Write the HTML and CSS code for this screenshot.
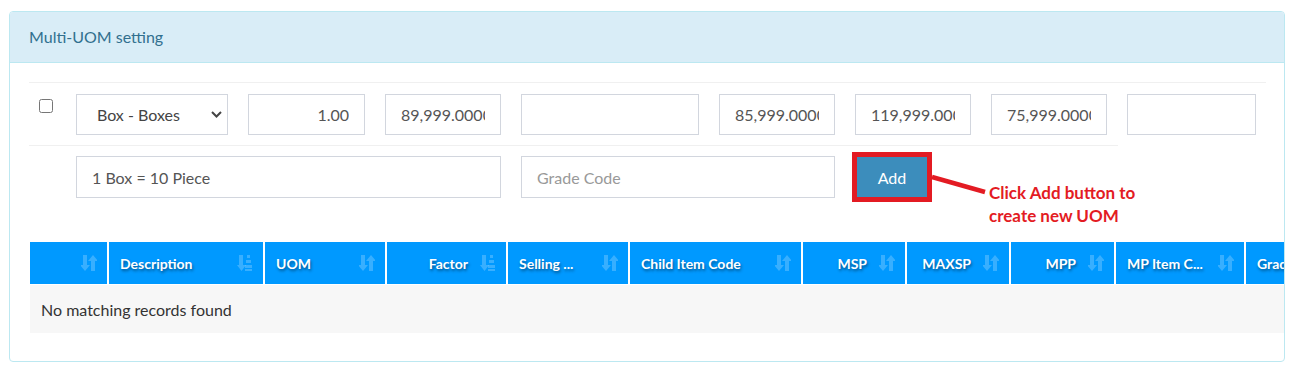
FILE: index.html
```html
<!DOCTYPE html>
<html lang="en">
<head>
  <meta charset="UTF-8">
  <title>Multi-UOM setting</title>
  <link rel="stylesheet" href="styles.css">
</head>
<body>
  <div class="panel">
    <div class="panel-heading">Multi-UOM setting</div>
    <div class="panel-body">

      <!-- main uom line -->
      <div class="form-row row-main">
        <div class="chk-cell"><input type="checkbox" class="chk"></div>
        <div class="select-wrap w-uom">
          <select class="field select">
            <option>Box - Boxes</option>
          </select>
          <svg class="chevron" width="11" height="7" viewBox="0 0 11 7"><path d="M1 1l4.5 4.5L10 1" fill="none" stroke="#444" stroke-width="2"/></svg>
        </div>
        <input class="field num w-factor" value="1.00">
        <input class="field w-price" value="89,999.00000">
        <input class="field w-wide" value="">
        <input class="field w-price" value="85,999.00000">
        <input class="field w-price" value="119,999.00000">
        <input class="field w-price" value="75,999.00000">
        <input class="field w-last" value="">
      </div>

      <!-- description / grade line -->
      <div class="form-row row-extra">
        <input class="field w-desc" value="1 Box = 10 Piece">
        <input class="field w-grade" placeholder="Grade Code">
        <div class="add-wrap">
          <button class="btn-add">Add</button>
          <svg class="callout-line" width="64" height="30" viewBox="0 0 64 30"><line x1="5" y1="8" x2="58" y2="23" stroke="#e31b23" stroke-width="4.5"/></svg>
          <div class="callout-text">Click Add button to<br>create new UOM</div>
        </div>
      </div>

      <div class="table-wrap">
        <table class="uom-table">
          <thead>
            <tr>
              <th class="c-chk"><svg class="sort" width="16" height="18" viewBox="0 0 16 18"><path d="M2 1h4v10h3l-5 6-5-6h3z M10 17h4V7h3l-5-6-5 6h3z" /></svg></th>
              <th class="c-desc">Description<svg class="sort" width="16" height="18" viewBox="0 0 16 18"><path d="M1 1h4v10h3l-4.5 6L-1 11h2z" transform="translate(1 0)"/><rect x="10" y="1" width="3" height="3"/><rect x="9" y="6" width="5" height="3"/><rect x="8" y="11" width="7" height="3"/><rect x="8" y="15" width="7" height="2"/></svg></th>
              <th class="c-uom">UOM<svg class="sort" width="16" height="18" viewBox="0 0 16 18"><path d="M2 1h4v10h3l-5 6-5-6h3z M10 17h4V7h3l-5-6-5 6h3z" /></svg></th>
              <th class="c-factor right">Factor<svg class="sort" width="16" height="18" viewBox="0 0 16 18"><path d="M1 1h4v10h3l-4.5 6L-1 11h2z" transform="translate(1 0)"/><rect x="10" y="1" width="3" height="3"/><rect x="9" y="6" width="5" height="3"/><rect x="8" y="11" width="7" height="3"/><rect x="8" y="15" width="7" height="2"/></svg></th>
              <th class="c-sell">Selling ...<svg class="sort" width="16" height="18" viewBox="0 0 16 18"><path d="M2 1h4v10h3l-5 6-5-6h3z M10 17h4V7h3l-5-6-5 6h3z" /></svg></th>
              <th class="c-child">Child Item Code<svg class="sort" width="16" height="18" viewBox="0 0 16 18"><path d="M2 1h4v10h3l-5 6-5-6h3z M10 17h4V7h3l-5-6-5 6h3z" /></svg></th>
              <th class="c-msp right">MSP<svg class="sort" width="16" height="18" viewBox="0 0 16 18"><path d="M2 1h4v10h3l-5 6-5-6h3z M10 17h4V7h3l-5-6-5 6h3z" /></svg></th>
              <th class="c-maxsp right">MAXSP<svg class="sort" width="16" height="18" viewBox="0 0 16 18"><path d="M2 1h4v10h3l-5 6-5-6h3z M10 17h4V7h3l-5-6-5 6h3z" /></svg></th>
              <th class="c-mpp right">MPP<svg class="sort" width="16" height="18" viewBox="0 0 16 18"><path d="M2 1h4v10h3l-5 6-5-6h3z M10 17h4V7h3l-5-6-5 6h3z" /></svg></th>
              <th class="c-mpitem">MP Item C...<svg class="sort" width="16" height="18" viewBox="0 0 16 18"><path d="M2 1h4v10h3l-5 6-5-6h3z M10 17h4V7h3l-5-6-5 6h3z" /></svg></th>
              <th class="c-grade">Grade Code<svg class="sort" width="16" height="18" viewBox="0 0 16 18"><path d="M2 1h4v10h3l-5 6-5-6h3z M10 17h4V7h3l-5-6-5 6h3z" /></svg></th>
            </tr>
          </thead>
          <tbody>
            <tr>
              <td colspan="11" class="empty">No matching records found</td>
            </tr>
          </tbody>
        </table>
      </div>

    </div>
  </div>
</body>
</html>
```

FILE: styles.css
```css
* {
  box-sizing: border-box;
}
body {
  margin: 0;
  padding: 11px 8px 0 9px;
  font-family: 'Lato', 'Liberation Sans', sans-serif;
  font-size: 16px;
  color: #333;
  background: #fff;
}
.panel {
  border: 1px solid #bce8f1;
  border-radius: 4px;
  overflow: hidden;
}
.panel-heading {
  height: 51px;
  line-height: 50px;
  padding: 0 19px;
  background: #d9edf7;
  color: #31708f;
  border-bottom: 1px solid #bce8f1;
}
.panel-body {
  padding: 19px 18px 28px 19px;
}
.form-row {
  display: flex;
  align-items: flex-start;
  gap: 20px;
}
.row-main {
  border-top: 1px solid #f0f0f0;
  padding: 11px 10px 10px;
}
.row-extra {
  width: 1089px;
  border-top: 1px solid #f0f0f0;
  padding: 10px 0 0 47px;
  align-items: center;
}
.chk-cell {
  width: 17px;
  padding-top: 3px;
}
.chk {
  margin: 0;
  width: 14px;
  height: 14px;
}
.field {
  height: 41px;
  border: 1px solid #d2d6de;
  border-radius: 0;
  padding: 0 15px;
  font-family: inherit;
  font-size: 16px;
  color: #555;
  background: #fff;
  outline: none;
}
.field::placeholder {
  color: #999;
}
.num {
  text-align: right;
}
.select-wrap {
  position: relative;
}
.select {
  -webkit-appearance: none;
  appearance: none;
  width: 100%;
  padding-left: 20px;
  color: #444;
}
.chevron {
  position: absolute;
  right: 6px;
  top: 17px;
}
.w-uom { width: 153px; }
.w-factor { width: 117px; }
.w-price { width: 116px; }
.w-wide { width: 178px; }
.w-last { width: 129px; }
.w-desc { width: 425px; height: 42px; }
.w-grade { width: 314px; height: 42px; }

.add-wrap {
  position: relative;
  margin-left: 2px;
}
.btn-add {
  display: block;
  width: 70px;
  height: 40px;
  border: none;
  background: #3c8dbc;
  color: #fff;
  font-family: inherit;
  font-size: 16px;
  outline: 5px solid #e31b23;
}
.callout-line {
  position: absolute;
  left: 70px;
  top: 12px;
}
.callout-text {
  position: absolute;
  left: 132px;
  top: 24px;
  width: 220px;
  font-weight: bold;
  font-size: 17px;
  line-height: 23px;
  color: #e31b23;
}

.table-wrap {
  margin: 44px -18px 0 1px;
  overflow: hidden;
}
.uom-table {
  table-layout: fixed;
  width: 1366px;
  border-collapse: separate;
  border-spacing: 0;
}
.uom-table th {
  position: relative;
  height: 42px;
  padding: 0 30px 0 11px;
  background: #0099ff;
  color: #fff;
  font-size: 14px;
  font-weight: bold;
  text-align: left;
  white-space: nowrap;
  overflow: hidden;
  border-right: 2px solid #fff;
  text-shadow: 1px 2px 3px rgba(0, 0, 0, 0.45);
}
.uom-table th.right {
  text-align: right;
  padding-right: 38px;
}
.sort {
  position: absolute;
  right: 10px;
  top: 12px;
  fill: rgba(255, 255, 255, 0.22);
}
.c-chk { width: 79px; }
.c-desc { width: 156px; }
.c-uom { width: 122px; }
.c-factor { width: 121px; }
.c-sell { width: 122px; }
.c-child { width: 173px; }
.c-msp { width: 104px; }
.c-maxsp { width: 104px; }
.c-mpp { width: 105px; }
.c-mpitem { width: 130px; }
.c-grade { width: 150px; }
.uom-table td.empty {
  height: 49px;
  padding: 0 11px;
  background: #f7f7f7;
  color: #333;
  border-top: 1px solid #fff;
}
```
